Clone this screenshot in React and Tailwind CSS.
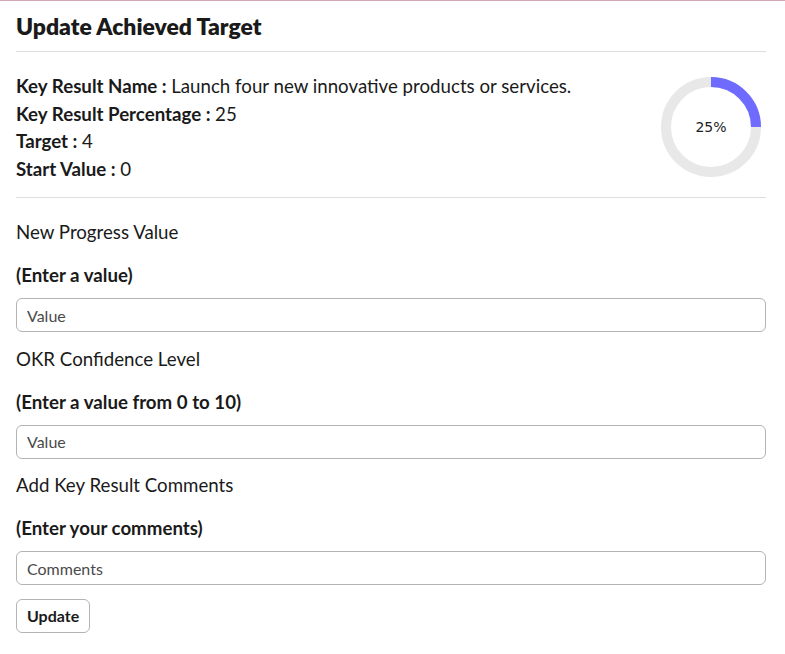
import { useState } from "react";

const Donut = ({ percent }) => {
  const r = 45;
  const c = 2 * Math.PI * r;
  return (
    <div className="relative w-[100px] h-[100px] shrink-0">
      <svg width="100" height="100" viewBox="0 0 100 100">
        <circle cx="50" cy="50" r={r} fill="none" stroke="#e8e8e8" strokeWidth="10" />
        <circle
          cx="50"
          cy="50"
          r={r}
          fill="none"
          stroke="#6f6bff"
          strokeWidth="10"
          strokeDasharray={`${(c * percent) / 100} ${c}`}
          transform="rotate(-90 50 50)"
        />
      </svg>
      <div className="absolute inset-0 flex items-center justify-center text-[14px] text-[#222] font-['DejaVu_Sans',sans-serif]">
        {percent}%
      </div>
    </div>
  );
};

const Field = ({ label, hint, placeholder, first }) => (
  <div className={first ? "mt-[21px]" : "mt-[13.5px]"}>
    <p className="text-[18.7px] leading-[27px] text-[#1a1a1a]">{label}</p>
    <p className="mt-[16px] text-[18.7px] leading-[27px] font-bold text-[#1a1a1a]">{hint}</p>
    <input
      type="text"
      placeholder={placeholder}
      className="mt-[9px] w-full h-[34px] rounded-md border border-[#b3b3b3] px-[10px] text-[16px] text-[#333] placeholder:text-[#4a4a4a] outline-none"
    />
  </div>
);

const App = () => {
  const [info] = useState({
    name: "Launch four new innovative products or services.",
    percentage: 25,
    target: 4,
    start: 0,
  });

  return (
    <div className="min-h-screen bg-white border-t border-[#d4a5b4] font-['Lato',sans-serif] text-[#1a1a1a]">
      <div className="ml-4 w-[750px] pb-5">
        <h2 className="pt-[10px] pb-[10px] text-[22.9px] leading-[30px] font-extrabold">
          Update Achieved Target
        </h2>
        <div className="border-t border-[#dddddd]" />

        <div className="flex items-center justify-between mt-[21px]">
          <div className="text-[18.7px] leading-[27.5px]">
            <p>
              <span className="font-bold">Key Result Name : </span>
              {info.name}
            </p>
            <p>
              <span className="font-bold">Key Result Percentage : </span>
              {info.percentage}
            </p>
            <p>
              <span className="font-bold">Target : </span>
              {info.target}
            </p>
            <p>
              <span className="font-bold">Start Value : </span>
              {info.start}
            </p>
          </div>
          <div className="mr-[5px] mb-[2px]">
            <Donut percent={info.percentage} />
          </div>
        </div>
        <div className="mt-[14px] border-t border-[#dddddd]" />

        <Field first label="New Progress Value" hint="(Enter a value)" placeholder="Value" />
        <Field label="OKR Confidence Level" hint="(Enter a value from 0 to 10)" placeholder="Value" />
        <Field label="Add Key Result Comments" hint="(Enter your comments)" placeholder="Comments" />

        <button className="mt-[14px] h-[34px] px-[10px] rounded-md border border-[#b3b3b3] bg-white text-[16px] font-bold text-[#1a1a1a]">
          Update
        </button>
      </div>
    </div>
  );
};

export default App;
